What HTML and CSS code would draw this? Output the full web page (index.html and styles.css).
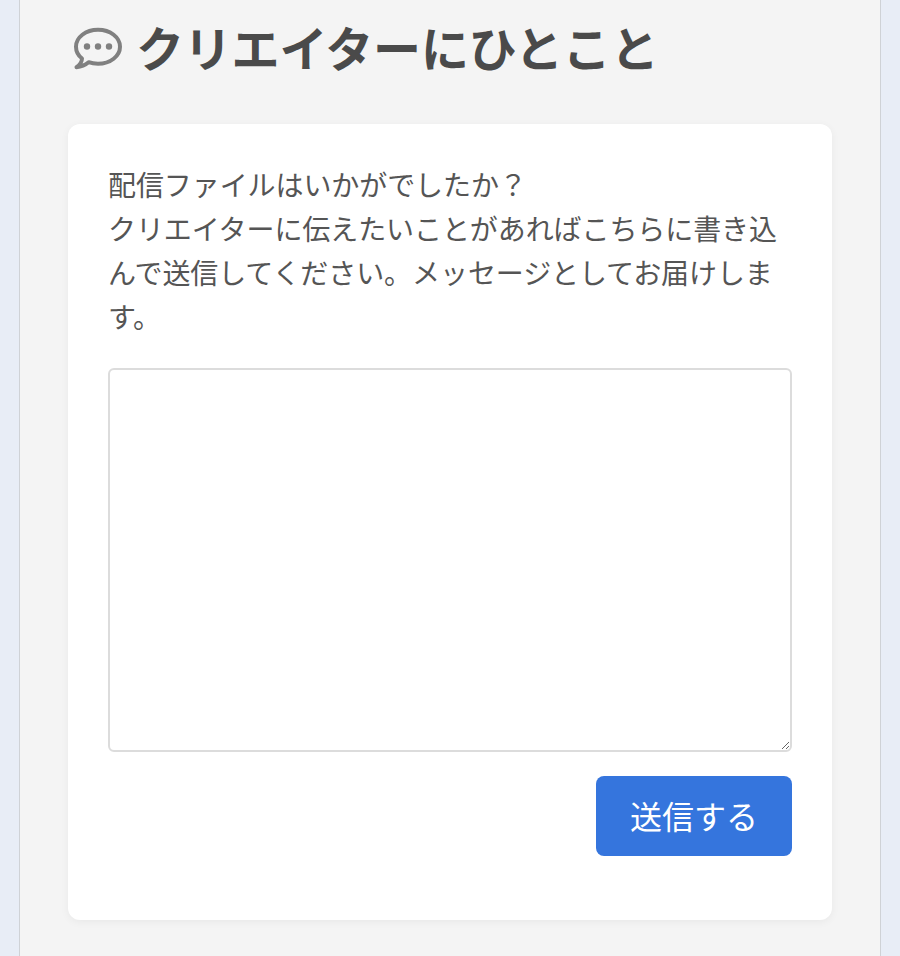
FILE: index.html
```html
<!DOCTYPE html>
<html lang="ja">
<head>
    <meta charset="UTF-8">
    <meta name="viewport" content="width=device-width, initial-scale=1.0">
    <title>クリエイターにひとこと</title>
    <link rel="stylesheet" href="styles.css">
</head>
<body>
    <div class="panel">
        <h2 class="title">
            <svg class="title-icon" width="50" height="44" viewBox="0 0 50 44" aria-hidden="true">
                <path d="M9 31.500C5 28.300 3 24.200 3 19.700 3 10.400 12.600 2.800 25 2.800s22 7.600 22 16.900S37.400 36.800 25 36.800c-3.300 0-6.500-.5-9.400-1.600-3.200 2.700-6.800 4.500-12.100 5 3.400-2.300 5.400-5 5.500-8.700z" fill="none" stroke="#808080" stroke-width="4" stroke-linejoin="round"/>
                <circle cx="14" cy="19.500" r="3.200" fill="#808080"/>
                <circle cx="25" cy="19.500" r="3.200" fill="#808080"/>
                <circle cx="36" cy="19.500" r="3.200" fill="#808080"/>
            </svg>
            クリエイターにひとこと
        </h2>

        <div class="card">
            <p class="lead">配信ファイルはいかがでしたか？<br>クリエイターに伝えたいことがあればこちらに書き込んで送信してください。メッセージとしてお届けします。</p>
            <textarea class="message"></textarea>
            <div class="actions">
                <button class="button" type="button">送信する</button>
            </div>
        </div>
    </div>
</body>
</html>
```

FILE: styles.css
```css
html, body {
    margin: 0;
    height: 956px;
    overflow: hidden;
}

body {
    font-family: "Noto Sans CJK JP", "Liberation Sans", sans-serif;
    background-color: #e8edf6;
    padding: 0 19px;
    color: #4a4a4a;
}

.panel {
    height: 956px;
    box-sizing: border-box;
    padding: 0 48px;
    background-color: #f4f4f4;
    border-left: 1px solid #cfd2d6;
    border-right: 1px solid #cfd2d6;
}

.title {
    display: flex;
    align-items: flex-start;
    gap: 13px;
    margin: 0;
    padding: 17px 0 0 5px;
    height: 124px;
    box-sizing: border-box;
    font-size: 48px;
    font-weight: 700;
    line-height: 58px;
    letter-spacing: -0.2px;
    color: #4a4a4a;
}

.title-icon {
    flex: none;
    margin-top: 10px;
}

.card {
    height: 796px;
    box-sizing: border-box;
    padding: 38px 40px 40px;
    background-color: #fff;
    border-radius: 12px;
    box-shadow: 0 2px 8px rgba(0, 0, 0, 0.05);
}

.lead {
    margin: 0 0 30px;
    font-size: 28px;
    line-height: 44px;
    letter-spacing: -0.08px;
    color: #555;
}

.message {
    display: block;
    width: 100%;
    height: 384px;
    box-sizing: border-box;
    border: 2px solid #dcdcdc;
    border-radius: 6px;
    background-color: #fff;
}

.actions {
    display: flex;
    justify-content: flex-end;
    margin-top: 24px;
}

.button {
    width: 196px;
    height: 80px;
    padding: 0 0 3px;
    border: 0;
    border-radius: 8px;
    background-color: #3575dd;
    color: #fff;
    font-family: inherit;
    font-size: 32px;
    cursor: pointer;
}
```
